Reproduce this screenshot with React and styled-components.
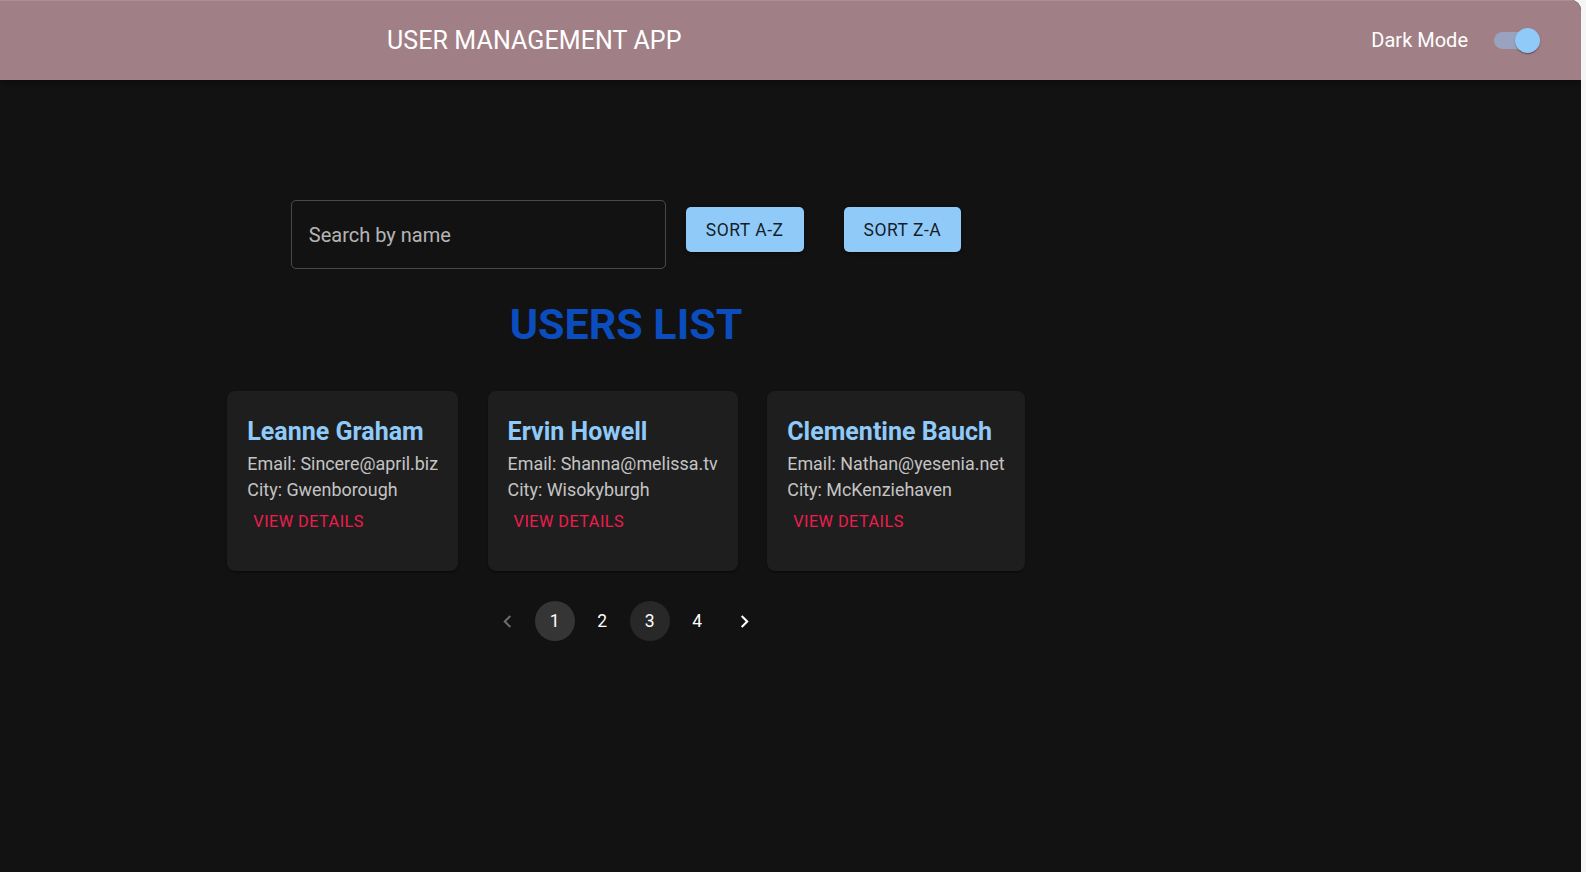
import React from 'react';
import styled, { createGlobalStyle } from 'styled-components';

const GlobalStyle = createGlobalStyle`
    body {
        margin: 0;
        background: #f6f6f6;
        font-family: Roboto, "Liberation Sans", sans-serif;
    }
`

const Shell = styled.div`
    width: calc(100% - 5px);
    min-height: 100vh;
    background: #121212;
    border-top-right-radius: 10px;
    overflow: hidden;
`

const AppBar = styled.header`
    height: 80px;
    box-sizing: border-box;
    display: flex;
    align-items: center;
    padding: 0 45px 1px 387px;
    background: #a17f86;
    border-top: 1px solid #ad9197;
    box-shadow: 0 2px 4px -1px rgba(0,0,0,0.2), 0 4px 5px 0 rgba(0,0,0,0.14);
`

const AppTitle = styled.h1`
    flex: 1;
    margin: 0;
    font-size: 25px;
    font-weight: 400;
    color: #ffffff;
    letter-spacing: 0.1px;
`

const ModeLabel = styled.span`
    font-size: 20px;
    color: #ffffff;
    margin-right: 26px;
`

const SwitchTrack = styled.div`
    position: relative;
    width: 42px;
    height: 17px;
    border-radius: 9px;
    background: ${p => p.$on ? '#99a3bf' : '#7a6a6d'};
`

const SwitchThumb = styled.div`
    position: absolute;
    top: -4px;
    right: ${p => p.$on ? '-4px' : 'auto'};
    left: ${p => p.$on ? 'auto' : '-4px'};
    width: 25px;
    height: 25px;
    border-radius: 50%;
    background: #90caf9;
    box-shadow: 0 2px 1px -1px rgba(0,0,0,0.2), 0 1px 1px 0 rgba(0,0,0,0.14), 0 1px 3px 0 rgba(0,0,0,0.12);
`

const Main = styled.main`
    width: 1252px;
    display: flex;
    flex-direction: column;
    align-items: center;
    padding-top: 120px;
`

const SearchRow = styled.div`
    display: flex;
    align-items: flex-start;
`

const SearchBox = styled.div`
    width: 375px;
    height: 69px;
    box-sizing: border-box;
    border: 1px solid rgba(255,255,255,0.23);
    border-radius: 5px;
    display: flex;
    align-items: center;
    padding-left: 17px;
    font-size: 20px;
    color: rgba(255,255,255,0.7);
`

const SortButton = styled.button`
    margin-top: 7px;
    margin-left: ${p => p.$gap}px;
    height: 45px;
    padding: 0 20px;
    border: none;
    border-radius: 5px;
    background: #90caf9;
    color: rgba(0,0,0,0.87);
    font-family: Roboto, sans-serif;
    font-size: 17.5px;
    font-weight: 400;
    letter-spacing: 0.5px;
    box-shadow: 0 3px 1px -2px rgba(0,0,0,0.2), 0 2px 2px 0 rgba(0,0,0,0.14), 0 1px 5px 0 rgba(0,0,0,0.12);
`

const ListTitle = styled.h2`
    margin: 29px 0 40px;
    font-size: 43px;
    line-height: 53px;
    font-weight: 700;
    color: #0b4dbe;
`

const CardRow = styled.div`
    display: flex;
    gap: 29.5px;
`

const Card = styled.div`
    background: #1e1e1e;
    border-radius: 8px;
    padding: 21px 20px 30px;
    display: flex;
    flex-direction: column;
    align-items: flex-start;
    box-shadow: 0 2px 1px -1px rgba(0,0,0,0.2), 0 1px 1px 0 rgba(0,0,0,0.14), 0 1px 3px 0 rgba(0,0,0,0.12);
`

const Name = styled.div`
    font-size: 25px;
    line-height: 39px;
    font-weight: 700;
    color: #90caf9;
`

const Info = styled.div`
    font-size: 17.9px;
    line-height: 26px;
    color: #c4c4c4;
    white-space: nowrap;
`

const DetailsButton = styled.button`
    padding: 5px 6px;
    border: none;
    background: transparent;
    color: #f01c4d;
    font-family: Roboto, sans-serif;
    font-size: 16.25px;
    line-height: 28.4px;
    font-weight: 400;
    letter-spacing: 0.46px;
    text-transform: uppercase;
`

const Pager = styled.nav`
    display: flex;
    margin-top: 30px;
`

const PageItem = styled.div`
    width: 40px;
    height: 40px;
    margin: 0 3.75px;
    border-radius: 50%;
    display: flex;
    align-items: center;
    justify-content: center;
    font-size: 17.5px;
    color: #ffffff;
    opacity: ${p => p.$disabled ? 0.38 : 1};
    background: ${p => p.$selected ? '#353535' : p.$hover ? '#282828' : 'transparent'};
`

const Chevron = ({ dir }) => (
    <svg width="25" height="25" viewBox="0 0 24 24" fill="#fff">
        <path d={dir === 'left'
            ? 'M15.41 7.41 14 6l-6 6 6 6 1.41-1.41L10.83 12z'
            : 'M10 6 8.59 7.41 13.17 12l-4.58 4.59L10 18l6-6z'} />
    </svg>
)

const users = [
    { name: 'Leanne Graham', email: 'Sincere@april.biz', city: 'Gwenborough' },
    { name: 'Ervin Howell', email: 'Shanna@melissa.tv', city: 'Wisokyburgh' },
    { name: 'Clementine Bauch', email: 'Nathan@yesenia.net', city: 'McKenziehaven' },
]

export default function App() {
    return (
        <Shell>
            <GlobalStyle />
            <AppBar>
                <AppTitle>USER MANAGEMENT APP</AppTitle>
                <ModeLabel>Dark Mode</ModeLabel>
                <SwitchTrack $on>
                    <SwitchThumb $on />
                </SwitchTrack>
            </AppBar>
            <Main>
                <SearchRow>
                    <SearchBox>Search by name</SearchBox>
                    <SortButton $gap={20}>SORT A-Z</SortButton>
                    <SortButton $gap={40}>SORT Z-A</SortButton>
                </SearchRow>
                <ListTitle>USERS LIST</ListTitle>
                <CardRow>
                    {users.map(u => (
                        <Card key={u.name}>
                            <Name>{u.name}</Name>
                            <Info>Email: {u.email}</Info>
                            <Info>City: {u.city}</Info>
                            <DetailsButton>View Details</DetailsButton>
                        </Card>
                    ))}
                </CardRow>
                <Pager>
                    <PageItem $disabled><Chevron dir="left" /></PageItem>
                    <PageItem $selected>1</PageItem>
                    <PageItem>2</PageItem>
                    <PageItem $hover>3</PageItem>
                    <PageItem>4</PageItem>
                    <PageItem><Chevron dir="right" /></PageItem>
                </Pager>
            </Main>
        </Shell>
    );
}
